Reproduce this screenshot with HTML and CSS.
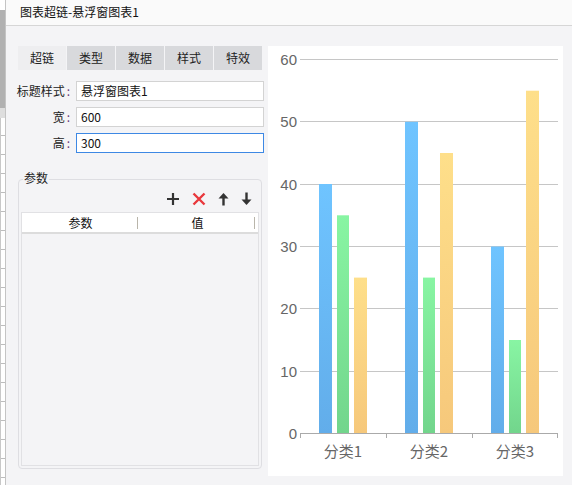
FILE: index.html
```html
<!DOCTYPE html>
<html lang="zh">
<head>
<meta charset="utf-8">
<link rel="stylesheet" href="styles.css">
</head>
<body>
<div class="app">
  <div class="strip">
    <div class="strip-top"></div>
    <div class="strip-thumb"></div>
    <div class="strip-gap"></div>
    <div class="strip-ruler"></div>
  </div>
  <div class="dialog">
    <div class="titlebar">图表超链-悬浮窗图表1</div>
    <div class="content">
      <div class="left">
        <div class="tabs">
          <div class="tab active">超链</div>
          <div class="tab">类型</div>
          <div class="tab">数据</div>
          <div class="tab">样式</div>
          <div class="tab">特效</div>
        </div>
        <div class="form">
          <label class="lbl">标题样式<span class="colon">:</span></label>
          <div class="input">悬浮窗图表1</div>
          <label class="lbl">宽<span class="colon">:</span></label>
          <div class="input">600</div>
          <label class="lbl">高<span class="colon">:</span></label>
          <div class="input focus">300</div>
        </div>
        <div class="params">
          <div class="legend">参数</div>
          <div class="toolbar">
            <svg class="ico" viewBox="0 0 14 14"><path d="M7 1V13M1 7H13" stroke="#333" stroke-width="2.2" fill="none"/></svg>
            <svg class="ico" viewBox="0 0 14 14"><path d="M1.5 1.5L12.5 12.5M12.5 1.5L1.5 12.5" stroke="#e8383d" stroke-width="2.4" fill="none"/></svg>
            <svg class="ico sm" viewBox="0 0 11 14"><path d="M5.5 13.5V4" stroke="#333" stroke-width="2.4" fill="none"/><path d="M0.5 6.5L5.5 1L10.5 6.5Z" fill="#333"/></svg>
            <svg class="ico sm" viewBox="0 0 11 14"><path d="M5.5 0.5V10" stroke="#333" stroke-width="2.4" fill="none"/><path d="M0.5 7.5L5.5 13L10.5 7.5Z" fill="#333"/></svg>
          </div>
          <div class="table">
            <div class="thead">
              <div class="th">参数</div>
              <div class="th">值</div>
            </div>
            <div class="tbody"></div>
          </div>
        </div>
      </div>
      <div class="chart">
        <svg width="295" height="430" viewBox="0 0 295 430">
          <defs>
            <linearGradient id="gb" x1="0" y1="0" x2="0" y2="1">
              <stop offset="0" stop-color="#6fc4ff"/><stop offset="1" stop-color="#62adea"/>
            </linearGradient>
            <linearGradient id="gg" x1="0" y1="0" x2="0" y2="1">
              <stop offset="0" stop-color="#88f5a3"/><stop offset="1" stop-color="#72d58c"/>
            </linearGradient>
            <linearGradient id="go" x1="0" y1="0" x2="0" y2="1">
              <stop offset="0" stop-color="#fedf8a"/><stop offset="1" stop-color="#f6c87b"/>
            </linearGradient>
          </defs>
          <g stroke="#c6c6c6" stroke-width="1">
            <line x1="32" y1="13.5" x2="290" y2="13.5"/>
            <line x1="32" y1="75.5" x2="290" y2="75.5"/>
            <line x1="32" y1="138.5" x2="290" y2="138.5"/>
            <line x1="32" y1="200.5" x2="290" y2="200.5"/>
            <line x1="32" y1="262.5" x2="290" y2="262.5"/>
            <line x1="32" y1="325.5" x2="290" y2="325.5"/>
          </g>
          <g>
            <rect x="51" y="138" width="13" height="249.5" fill="url(#gb)"/>
            <rect x="69" y="169.3" width="12" height="218.2" fill="url(#gg)"/>
            <rect x="86" y="231.6" width="13" height="155.9" fill="url(#go)"/>
            <rect x="137" y="75.8" width="13" height="311.7" fill="url(#gb)"/>
            <rect x="155" y="231.6" width="12" height="155.9" fill="url(#gg)"/>
            <rect x="172" y="107" width="13" height="280.5" fill="url(#go)"/>
            <rect x="223" y="200.5" width="13" height="187" fill="url(#gb)"/>
            <rect x="241" y="294" width="12" height="93.5" fill="url(#gg)"/>
            <rect x="258" y="44.7" width="13" height="342.8" fill="url(#go)"/>
          </g>
          <g stroke="#aaaaaa" stroke-width="1">
            <line x1="32" y1="387.5" x2="290" y2="387.5"/>
            <line x1="32.5" y1="387.5" x2="32.5" y2="392"/>
            <line x1="118.5" y1="387.5" x2="118.5" y2="392"/>
            <line x1="204.5" y1="387.5" x2="204.5" y2="392"/>
            <line x1="289.5" y1="387.5" x2="289.5" y2="392"/>
          </g>
          <g class="ylab" text-anchor="end">
            <text x="29" y="19">60</text>
            <text x="29" y="81">50</text>
            <text x="29" y="144">40</text>
            <text x="29" y="206">30</text>
            <text x="29" y="268">20</text>
            <text x="29" y="331">10</text>
            <text x="29" y="393">0</text>
          </g>
          <g class="xlab" text-anchor="middle">
            <text x="75" y="411">分类1</text>
            <text x="161" y="411">分类2</text>
            <text x="247" y="411">分类3</text>
          </g>
        </svg>
      </div>
    </div>
  </div>
</div>
</body>
</html>
```

FILE: styles.css
```css
* { box-sizing: border-box; }
html, body { margin: 0; padding: 0; }
body {
  width: 572px;
  height: 485px;
  overflow: hidden;
  font-family: "Noto Sans CJK SC", "Liberation Sans", sans-serif;
  font-size: 12px;
  color: #222;
  background: #f4f4f6;
}
.app {
  display: flex;
  width: 572px;
  height: 485px;
}
.strip {
  width: 6px;
  display: flex;
  flex-direction: column;
  background: #fff;
  border-right: 1px solid #c4c4c4;
}
.strip-top { height: 10px; background: #fff; }
.strip-thumb { height: 98px; background: #b1b1b1; }
.strip-gap { height: 10px; background: #dedede; }
.strip-ruler {
  flex: 1;
  background: repeating-linear-gradient(to bottom, transparent 0, transparent 17px, #bdbdbd 17px, #bdbdbd 18px, transparent 18px, transparent 19px);
  border-left: 1px solid #c8c8c8;
}
.dialog {
  flex: 1;
  display: flex;
  flex-direction: column;
}
.titlebar {
  height: 26px;
  background: #fafafa;
  border-bottom: 1px solid #d6d6d6;
  padding-left: 14px;
  line-height: 24px;
  font-size: 12px;
  color: #111;
}
.content {
  flex: 1;
  display: flex;
  padding: 20px 9px 0 12px;
  gap: 6px;
}
.left {
  width: 244px;
  display: flex;
  flex-direction: column;
}
.tabs {
  display: flex;
  gap: 1px;
  height: 24px;
}
.tab {
  width: 48px;
  background: #d8d9dc;
  text-align: center;
  line-height: 24px;
  font-size: 12px;
  color: #222;
}
.tab.active { background: #eeeef0; }
.form {
  margin-top: 11px;
  margin-left: -4px;
  display: grid;
  grid-template-columns: 56px 188px;
  column-gap: 6px;
  row-gap: 6px;
}
.lbl {
  text-align: right;
  line-height: 20px;
  font-size: 12px;
  color: #222;
  white-space: nowrap;
}
.colon { color: #6b3a7a; padding-left: 2px; }
.input {
  height: 20px;
  border: 1px solid #d3d3d3;
  background: #fff;
  line-height: 18px;
  padding-left: 4px;
  font-size: 12px;
  color: #111;
}
.input.focus { border-color: #3d88e4; }
.params {
  position: relative;
  margin-top: 26px;
  height: 290px;
  border: 1px solid #dedee2;
  border-radius: 4px;
  padding: 11px 2px 2px 2px;
  display: flex;
  flex-direction: column;
}
.legend {
  position: absolute;
  left: 4px;
  top: -10px;
  padding: 0 1px;
  background: #f4f4f6;
  line-height: 16px;
  font-size: 12px;
  color: #222;
}
.toolbar {
  display: flex;
  justify-content: flex-end;
  align-items: center;
  gap: 12px;
  padding-right: 7px;
  height: 16px;
}
.ico { width: 14px; height: 14px; display: block; }
.ico.sm { width: 11px; height: 14px; }
.table {
  margin-top: 5px;
  flex: 1;
  display: flex;
  flex-direction: column;
  border: 1px solid #e1e1e4;
}
.thead {
  display: flex;
  height: 21px;
  background: #fff;
  border-bottom: 2px solid #dcdcdc;
}
.th {
  width: 117px;
  text-align: center;
  line-height: 19px;
  font-size: 12px;
  color: #111;
  position: relative;
}
.th::after {
  content: "";
  position: absolute;
  right: 1px;
  top: 4px;
  height: 12px;
  width: 1px;
  background: #b9b5aa;
}
.tbody { flex: 1; background: #f4f4f6; }
.chart {
  width: 295px;
  height: 430px;
  background: #fff;
}
.chart svg { display: block; }
.ylab text {
  font-family: "Liberation Sans", "Noto Sans CJK SC", sans-serif;
  font-size: 15px;
  fill: #666;
}
.xlab text {
  font-family: "Noto Sans CJK SC", "Liberation Sans", sans-serif;
  font-size: 15px;
  fill: #666;
}
```
